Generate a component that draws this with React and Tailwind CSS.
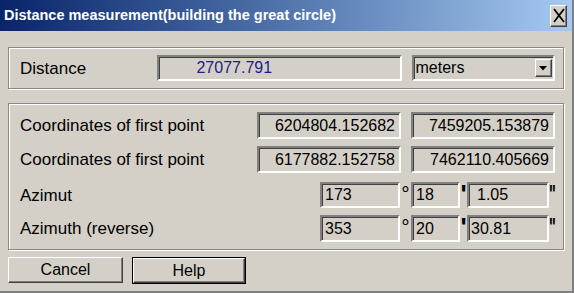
import React from "react";

const sunken =
  "h-full border-2 border-t-[#808080] border-l-[#808080] border-b-white border-r-white shadow-[inset_1px_1px_0_#404040] bg-[#d4d0c8] flex items-center text-[16px] leading-none";

function Box({ w, align = "left", children, extra = "" }) {
  return (
    <div className={`${sunken} text-black ${w} ${align === "right" ? "justify-end pr-[4px]" : "pl-[2px]"} ${extra}`}>
      {children}
    </div>
  );
}

function Deg() {
  return (
    <span className="w-[11px] h-full flex justify-center items-start text-[21px] leading-none pt-[1px]">
      °
    </span>
  );
}

function Min() {
  return (
    <span className="w-[7px] h-full flex justify-center items-start text-[26px] font-bold leading-none -mt-[3px]">
      '
    </span>
  );
}

function Sec() {
  return (
    <span className="w-[6px] h-full flex justify-start items-start overflow-visible -mt-[3px]">
      <span className="inline-block text-[26px] font-bold leading-none scale-x-[0.55] origin-left">"</span>
    </span>
  );
}

export default function App() {
  return (
    <div
      className="w-[574px] h-[293px] bg-[#d4d0c8] flex flex-col border-r-2 border-b-2 border-r-[#808080] border-b-[#808080] overflow-hidden"
      style={{ fontFamily: '"Liberation Sans", Arial, sans-serif' }}
    >
      {/* Title bar */}
      <div className="h-[31px] shrink-0 flex items-center justify-between bg-gradient-to-r from-[#0a246a] to-[#a6caf0] pl-[4px] pr-[5px]">
        <span className="text-white font-bold text-[14.5px] leading-none">
          Distance measurement(building the great circle)
        </span>
        <div className="w-[17px] h-[22px] bg-[#d4d0c8] border border-t-white border-l-white border-b-[#404040] border-r-[#404040] shadow-[inset_-1px_-1px_0_#808080] flex items-center justify-center">
          <svg width="12" height="15" viewBox="0 0 12 15">
            <path d="M1 1 L11 14 M11 1 L1 14" stroke="#000" strokeWidth="1.8" />
          </svg>
        </div>
      </div>

      <div className="flex flex-col px-2 pt-[16px]">
        {/* Group 1 */}
        <div className="h-[42px] border border-[#8a877f] shadow-[inset_1px_1px_0_white,1px_1px_0_white] flex items-center pl-[11px] pr-[8px]">
          <span className="w-[138px] text-[17px] leading-none">Distance</span>
          <div className="h-[26px] w-[245px]">
            <div className={`${sunken} pl-[37px] text-[#1c1c8a]`}>27077.791</div>
          </div>
          <div className="h-[26px] w-[144px] ml-[10px]">
            <div className={`${sunken} text-black pl-[2px] justify-between pr-[1px]`}>
              <span>meters</span>
              <div className="w-[17px] h-[18px] bg-[#d4d0c8] border border-t-white border-l-white border-b-[#404040] border-r-[#404040] shadow-[inset_-1px_-1px_0_#808080] flex items-center justify-center">
                <svg width="8" height="5" viewBox="0 0 8 5">
                  <path d="M0 0 H8 L4 4.5 Z" fill="#000" />
                </svg>
              </div>
            </div>
          </div>
        </div>

        {/* Group 2 */}
        <div className="mt-[14px] h-[147px] border border-[#8a877f] shadow-[inset_1px_1px_0_white,1px_1px_0_white] flex flex-col pl-[11px] pr-[8px] pt-[8px]">
          <div className="h-[27px] flex items-center">
            <span className="flex-1 text-[17px] leading-none">Coordinates of first point</span>
            <Box w="w-[144px]" align="right">6204804.152682</Box>
            <Box w="w-[144px] ml-[10px]" align="right">7459205.153879</Box>
          </div>
          <div className="h-[27px] flex items-center mt-[7px]">
            <span className="flex-1 text-[17px] leading-none">Coordinates of first point</span>
            <Box w="w-[144px]" align="right">6177882.152758</Box>
            <Box w="w-[144px] ml-[10px]" align="right">7462110.405669</Box>
          </div>
          <div className="h-[26px] flex items-center mt-[9px]">
            <span className="flex-1 text-[17px] leading-none">Azimut</span>
            <Box w="w-[80px]" extra="pl-[3px]">173</Box>
            <Deg />
            <Box w="w-[49px]" extra="pl-[3px]">18</Box>
            <Min />
            <Box w="w-[82px]" extra="pl-[8px]">1.05</Box>
            <Sec />
          </div>
          <div className="h-[27px] flex items-center mt-[7px]">
            <span className="flex-1 text-[17px] leading-none">Azimuth (reverse)</span>
            <Box w="w-[80px]" extra="pl-[3px]">353</Box>
            <Deg />
            <Box w="w-[49px]" extra="pl-[3px]">20</Box>
            <Min />
            <Box w="w-[82px]" extra="pl-[1px]">30.81</Box>
            <Sec />
          </div>
        </div>

        {/* Buttons */}
        <div className="flex mt-[7px]">
          <div className="w-[115px] h-[26px] bg-[#d4d0c8] border border-t-white border-l-white border-b-[#404040] border-r-[#404040] shadow-[inset_-1px_-1px_0_#808080] flex items-center justify-center text-[16px] leading-none">
            Cancel
          </div>
          <div className="ml-[9px] w-[114px] h-[27px] border border-black">
            <div className="w-full h-full bg-[#d4d0c8] border border-t-white border-l-white border-b-[#404040] border-r-[#404040] shadow-[inset_-1px_-1px_0_#808080] flex items-center justify-center text-[16px] leading-none">
              Help
            </div>
          </div>
        </div>
      </div>
    </div>
  );
}
